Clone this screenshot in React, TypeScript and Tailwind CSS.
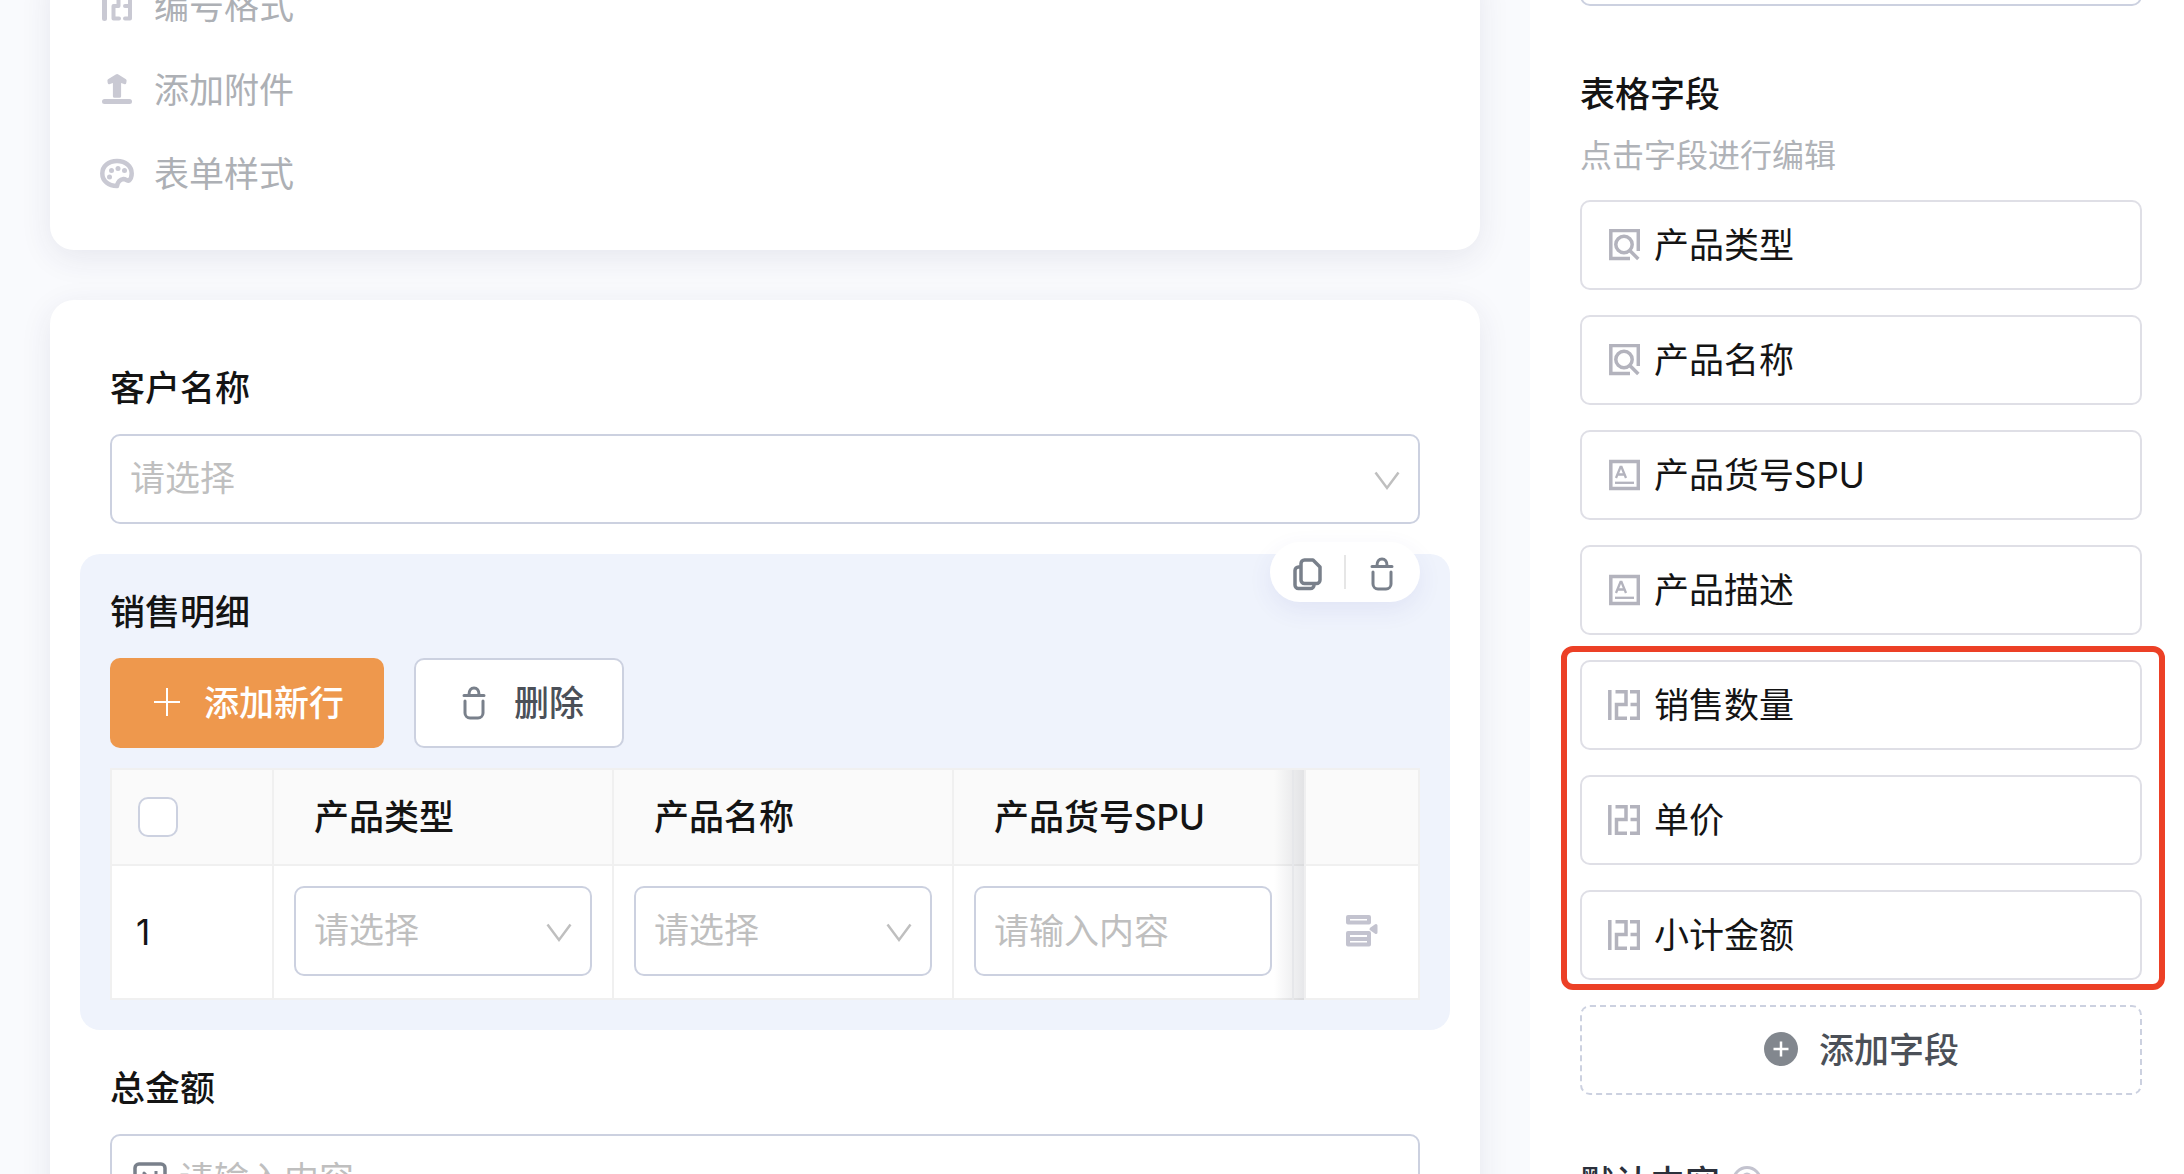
import React, { useState } from "react";

const menuItems = [
  { id: 1, label: "编号格式", icon: "number" },
  { id: 2, label: "添加附件", icon: "upload" },
  { id: 3, label: "表单样式", icon: "palette" },
];

const tableFields = [
  { id: 1, label: "产品类型", icon: "search" },
  { id: 2, label: "产品名称", icon: "search" },
  { id: 3, label: "产品货号SPU", icon: "text" },
  { id: 4, label: "产品描述", icon: "text" },
];

const amountFields = [
  { id: 5, label: "销售数量", icon: "digits" },
  { id: 6, label: "单价", icon: "digits" },
  { id: 7, label: "小计金额", icon: "digits" },
];

function MenuIcon({ name }: { name: string }) {
  if (name === "number") {
    return (
      <svg className="h-[34px] w-[34px] shrink-0" viewBox="0 0 34 34" fill="none" stroke="#c9c9d3" strokeWidth="5" strokeLinecap="round" strokeLinejoin="round">
        <path d="M4.500 4.500v25" />
        <path d="M13 5h5.500v12h-5v12.500h5.500" strokeWidth="4" />
        <path d="M25 5h5v24.500h-5M25 17h5" strokeWidth="4" />
      </svg>
    );
  }
  if (name === "upload") {
    return (
      <svg className="h-[34px] w-[34px] shrink-0" viewBox="0 0 34 34" fill="#c9c9d3">
        <path d="M15.800 1.400a2.500 2.500 0 0 1 2.600 0l7.200 4.500a2 2 0 0 1 1 1.900l-.3 2.200a1.600 1.600 0 0 1-2.300 1l-2.900-1v13.200a1.600 1.600 0 0 1-1.600 1.600h-5a1.600 1.600 0 0 1-1.600-1.600V10l-2.900 1a1.600 1.600 0 0 1-2.300-1l-.3-2.200a2 2 0 0 1 1-1.900z" />
        <rect x="2" y="26" width="30" height="5" rx="2.500" />
      </svg>
    );
  }
  return (
    <svg className="h-[34px] w-[34px] shrink-0" viewBox="0 0 34 34" fill="none">
      <path
        d="M17 4C8.500 4 2.300 9 2.300 16.500S8.500 29 17 29c.8-4.500 3-6.500 6.500-7 2.500 0 3.500 2 5.500 1.600 1.600-1.400 2.700-4 2.700-7C31.700 9 25.500 4 17 4z"
        stroke="#c9c9d3"
        strokeWidth="4.500"
        strokeLinejoin="round"
      />
      <circle cx="11.500" cy="13.500" r="2.500" fill="#c9c9d3" />
      <circle cx="18" cy="11.500" r="2.500" fill="#c9c9d3" />
      <circle cx="24.500" cy="13.500" r="2.500" fill="#c9c9d3" />
      <circle cx="9.500" cy="20" r="2.500" fill="#c9c9d3" />
    </svg>
  );
}

function FieldIcon({ name }: { name: string }) {
  if (name === "search") {
    return (
      <svg className="h-8 w-8 shrink-0" viewBox="0 0 32 32" fill="none" stroke="#b3b3bd" strokeWidth="3.500">
        <path d="M22 29.500H2.800v-28h27.500V22" />
        <circle cx="16" cy="15.500" r="8.200" />
        <path d="M21.800 21.500l8.500 8.500" />
      </svg>
    );
  }
  if (name === "text") {
    return (
      <svg className="h-8 w-8 shrink-0" viewBox="0 0 32 32" fill="none" stroke="#b3b3bd">
        <rect x="2.800" y="2.500" width="27.500" height="27" strokeWidth="3.500" />
        <path d="M8 19l4.500-11h1L18 19M9.500 15.500h7" strokeWidth="2.300" />
        <path d="M7 23.800h19" strokeWidth="2.300" />
      </svg>
    );
  }
  return (
    <svg className="h-8 w-8 shrink-0" viewBox="0 0 32 32" fill="none" stroke="#b3b3bd" strokeWidth="3.500">
      <path d="M1.800 1v30" />
      <path d="M7.500 2.800h10.500v12.700h-9.500v13.700h10.500" />
      <path d="M22 2.800h8.500v26.400h-8.500M22.500 15.500h8" />
    </svg>
  );
}

function TrashIcon() {
  return (
    <svg className="h-9 w-6 shrink-0" viewBox="0 0 24 36" fill="none" stroke="#79808b" strokeWidth="3" strokeLinecap="round">
      <path d="M2 10.500h20M7 9.500c0-4 2-6.500 5-6.500s5 2.500 5 6.500" />
      <path d="M3 16v12a5 5 0 0 0 5 5h8a5 5 0 0 0 5-5V16" />
    </svg>
  );
}

function CopyIcon() {
  return (
    <svg className="h-9 w-8 shrink-0" viewBox="0 0 32 36" fill="none" stroke="#79808b" strokeWidth="3.500" strokeLinejoin="round">
      <path d="M12.500 4H21l7 7v13a3.500 3.500 0 0 1-3.500 3.500h-12A3.500 3.500 0 0 1 9 24V7.500A3.500 3.500 0 0 1 12.500 4z" />
      <path d="M9 11H6.500A3.500 3.500 0 0 0 3 14.500V29a3.500 3.500 0 0 0 3.500 3.500h12A3.500 3.500 0 0 0 22 29v-1" />
    </svg>
  );
}

function SelectBox({ id, label }: { id: string; label?: string }) {
  return (
    <div className="relative w-full">
      <select
        id={id}
        aria-label={label}
        className="block h-[90px] w-full appearance-none rounded-[10px] border-2 border-[#ccd1e0] bg-white px-[18px] pb-0.5 text-[35px] text-[#bfbfbf]"
      >
        <option>请选择</option>
      </select>
      <svg
        className="pointer-events-none absolute top-9 right-5 h-[22px] w-[26px]"
        viewBox="0 0 26 22"
        fill="none"
        stroke="#bfbfbf"
        strokeWidth="2.500"
      >
        <path d="M1.500 2.500L13 18 24.500 2.500" />
      </svg>
    </div>
  );
}

function FieldButton({ label, icon }: { label: string; icon: string }) {
  return (
    <button className="flex h-[90px] w-full items-center gap-3.5 rounded-[10px] border-2 border-[#dfdfe6] bg-white px-[26px] text-[35px] text-[#141414]">
      <FieldIcon name={icon} />
      {label}
    </button>
  );
}

function SalesTable() {
  const [checked, setChecked] = useState(false);

  return (
    <div className="relative mt-5">
      <table className="h-[232px] w-full table-fixed border-separate border-spacing-0 border-t-2 border-l-2 border-[#f0f0f0] bg-white text-[35px] text-[#141414]">
        <colgroup>
          <col className="w-[162px]" />
          <col />
          <col />
          <col />
          <col className="w-[126px]" />
        </colgroup>
        <thead>
          <tr className="h-24 bg-[#fafafa] text-left">
            <th className="border-r-2 border-b-2 border-[#f0f0f0] pl-[26px]">
              <input
                type="checkbox"
                aria-label="全选"
                checked={checked}
                onChange={(e) => setChecked(e.target.checked)}
                className="block h-10 w-10 appearance-none rounded-[10px] border-2 border-[#ccd1e0] bg-white"
              />
            </th>
            <th className="border-r-2 border-b-2 border-[#f0f0f0] pl-10 font-medium">产品类型</th>
            <th className="border-r-2 border-b-2 border-[#f0f0f0] pl-10 font-medium">产品名称</th>
            <th className="border-r-2 border-b-2 border-[#f0f0f0] pl-10 font-medium">产品货号SPU</th>
            <th className="border-r-2 border-b-2 border-[#f0f0f0]"></th>
          </tr>
        </thead>
        <tbody>
          <tr>
            <td className="border-r-2 border-b-2 border-[#f0f0f0] pl-6">1</td>
            <td className="border-r-2 border-b-2 border-[#f0f0f0] px-5 pb-0.5">
              <SelectBox id="row-type" label="产品类型" />
            </td>
            <td className="border-r-2 border-b-2 border-[#f0f0f0] px-5 pb-0.5">
              <SelectBox id="row-name" label="产品名称" />
            </td>
            <td className="border-r-2 border-b-2 border-[#f0f0f0] px-5 pb-0.5">
              <input
                aria-label="产品货号SPU"
                placeholder="请输入内容"
                className="block h-[90px] w-full rounded-[10px] border-2 border-[#ccd1e0] bg-white px-[18px] placeholder:text-[#bfbfbf]"
              />
            </td>
            <td className="border-r-2 border-b-2 border-[#f0f0f0]">
              <button aria-label="行操作" className="ml-[52px] block">
                <svg className="h-9 w-8" viewBox="0 0 32 36" fill="none" stroke="#c3c3cf" strokeWidth="4" strokeLinejoin="round">
                  <rect x="2" y="3" width="21" height="5.500" />
                  <path d="M2 19h21v11.500H2zM2 25h21" />
                  <path d="M30 11.500v7L25 15z" fill="#c3c3cf" strokeWidth="3" />
                </svg>
              </button>
            </td>
          </tr>
        </tbody>
      </table>
      {/* shadow of the fixed column */}
      <div className="pointer-events-none absolute top-0.5 right-[114px] bottom-0 w-8 border-r-2 border-[#efeff0] bg-linear-to-r from-transparent to-[#5c6070]/15">
        <div className="ml-[18px] h-full w-0.5 bg-[#e6e7ea]"></div>
      </div>
      <div className="pointer-events-none absolute top-0.5 right-0.5 h-[94px] w-[112px] bg-[#fafafa]"></div>
    </div>
  );
}

function FormPanel() {
  return (
    <main className="min-w-0 grow px-[50px]">
      <section className="-mt-9 rounded-3xl bg-white pb-[34px] shadow-[0_8px_32px_rgba(40,45,90,0.09)]">
        {menuItems.map((item) => (
          <button key={item.id} className="flex h-[84px] items-center gap-5 pl-[50px] text-[35px] text-[#adb0b5]">
            <MenuIcon name={item.icon} />
            {item.label}
          </button>
        ))}
      </section>

      <section className="mt-[50px] rounded-3xl bg-white p-[30px] shadow-[0_8px_32px_rgba(40,45,90,0.09)]">
        <div className="px-[30px] pt-[34px] pb-[30px]">
          <label htmlFor="customer" className="mb-[22px] block text-[35px] leading-[48px] font-medium text-[#141414]">
            客户名称
          </label>
          <SelectBox id="customer" />
        </div>

        <div className="relative rounded-[20px] bg-[#eff3fc] px-[30px] pt-[34px] pb-[30px]">
          <div className="absolute -top-3 right-[30px] flex h-[60px] w-[150px] items-center justify-between rounded-full bg-white pt-1 pr-[26px] pl-[22px] shadow-[0_8px_24px_rgba(60,60,160,0.08)]">
            <button aria-label="复制">
              <CopyIcon />
            </button>
            <span className="mr-1 mb-1 h-[34px] w-0.5 bg-[#e6e6e6]"></span>
            <button aria-label="删除字段">
              <TrashIcon />
            </button>
          </div>
          <h3 className="mb-[22px] text-[35px] leading-[48px] font-medium text-[#141414]">销售明细</h3>
          <div className="flex gap-[30px]">
            <button className="flex h-[90px] items-center gap-[22px] rounded-[10px] bg-[#ee984d] pr-10 pl-[42px] text-[35px] font-medium text-white">
              <svg className="h-[30px] w-[30px]" viewBox="0 0 30 30" stroke="white" strokeWidth="2">
                <path d="M15 0v28M2 14h26" />
              </svg>
              添加新行
            </button>
            <button className="flex h-[90px] items-center gap-7 rounded-[10px] border-2 border-[#ccd1e0] bg-white pr-[38px] pl-[46px] text-[35px] font-medium text-[#4b5058]">
              <TrashIcon />
              删除
            </button>
          </div>
          <SalesTable />
        </div>

        <div className="px-[30px] pt-[34px] pb-[30px]">
          <label htmlFor="total" className="mb-[22px] block text-[35px] leading-[48px] font-medium text-[#141414]">
            总金额
          </label>
          <div className="flex h-[90px] items-center gap-3 rounded-[10px] border-2 border-[#ccd1e0] px-[21px]">
            <svg className="h-[34px] w-[34px] shrink-0" viewBox="0 0 34 34" fill="none" stroke="#79808b" strokeWidth="3.500" strokeLinejoin="round">
              <rect x="2" y="2" width="30" height="30" rx="4" />
              <path d="M11 25V11l12 13V9" strokeWidth="3" />
            </svg>
            <input id="total" placeholder="请输入内容" className="w-full text-[35px] placeholder:text-[#bfbfbf]" />
          </div>
        </div>
      </section>
    </main>
  );
}

function FieldPanel() {
  return (
    <aside className="w-[654px] shrink-0 bg-white pr-[42px] pl-[50px]">
      <input aria-label="标题" className="-mt-[84px] block h-[90px] w-full rounded-[10px] border-2 border-[#ccd1e0]" />
      <h3 className="mt-16 text-[35px] leading-[48px] font-medium text-[#141414]">表格字段</h3>
      <p className="mt-3.5 mb-5 text-[32px] leading-[48px] text-[#b0b3b8]">点击字段进行编辑</p>

      <div className="flex flex-col gap-[25px]">
        {tableFields.map((field) => (
          <FieldButton key={field.id} label={field.label} icon={field.icon} />
        ))}
        <div className="relative flex flex-col gap-[25px]">
          {amountFields.map((field) => (
            <FieldButton key={field.id} label={field.label} icon={field.icon} />
          ))}
          <div className="pointer-events-none absolute -top-3.5 -right-[23px] -bottom-2.5 -left-[19px] rounded-xl border-6 border-[#ec4026]"></div>
        </div>
        <button className="flex h-[90px] w-full items-center justify-center gap-5 rounded-[10px] border-2 border-dashed border-[#ccd1e0] text-[35px] font-medium text-[#4b5058]">
          <svg className="h-9 w-9" viewBox="0 0 36 36">
            <circle cx="18" cy="17" r="17" fill="#82878e" />
            <path d="M18 9.500v15M10.500 17h15" stroke="white" strokeWidth="2.500" />
          </svg>
          添加字段
        </button>
      </div>

      <h3 className="mt-16 flex items-center gap-3 text-[35px] leading-[48px] font-medium text-[#2b303b]">
        默认内容
        <svg className="h-[34px] w-[30px]" viewBox="0 0 30 34" fill="none" stroke="#c3c3cf" strokeWidth="3">
          <circle cx="15" cy="15" r="13.500" />
          <path d="M11 12a4 4 0 1 1 4 4v2M15 21v2" />
        </svg>
      </h3>
    </aside>
  );
}

function App() {
  return (
    <div className="flex h-screen overflow-hidden bg-[#f9fafd] font-['Inter','Noto_Sans_CJK_SC',sans-serif]">
      <FormPanel />
      <FieldPanel />
    </div>
  );
}

export default App;
